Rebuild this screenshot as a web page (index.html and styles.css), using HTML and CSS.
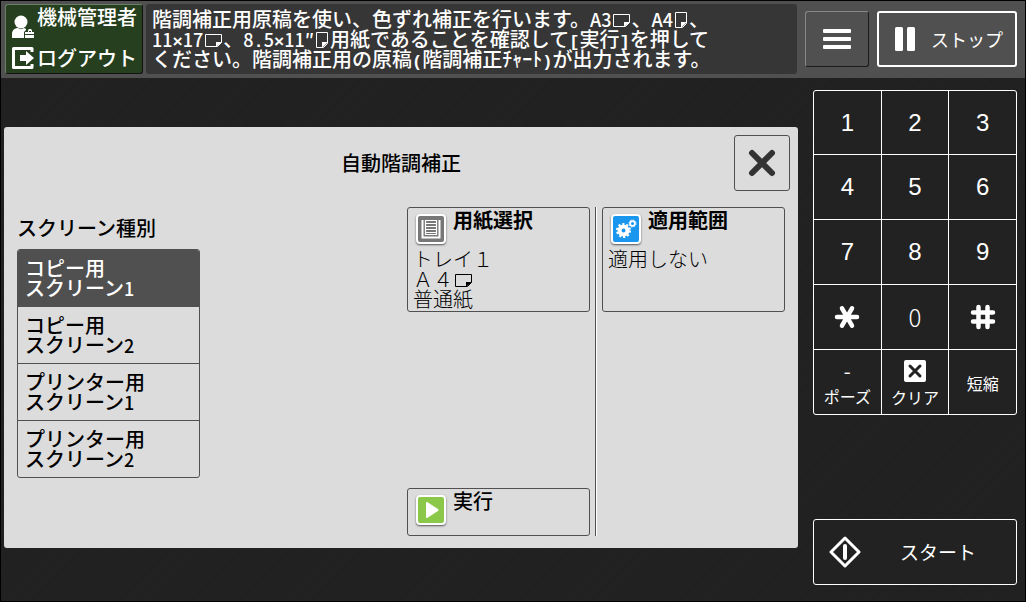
FILE: index.html
```html
<!DOCTYPE html>
<html lang="ja">

<head>
    <meta charset="UTF-8">
    <meta name="viewport" content="width=device-width, initial-scale=1.0">
    <title>自動階調補正</title>
    <link rel="stylesheet" href="styles.css">
</head>

<body>
    <!-- paper orientation marks, used inside the texts -->
    <svg class="defs" width="0" height="0" aria-hidden="true">
        <symbol id="landscape" viewBox="0 0 20 20">
            <path d="M2.500 4.500h16v8l-4 4h-12z" fill="none" stroke="currentColor" />
            <path d="M13 17v-5h6z" fill="currentColor" />
        </symbol>
        <symbol id="portrait" viewBox="0 0 16 20">
            <path d="M2.500 2.500h11v11l-4 4h-7z" fill="none" stroke="currentColor" />
            <path d="M8 18v-6h6z" fill="currentColor" />
        </symbol>
    </svg>

    <header class="topbar">
        <button type="button" class="user">
            <span class="user-row">
                <svg width="24" height="24" viewBox="0 0 24 24" fill="#fff" aria-hidden="true">
                    <circle cx="10" cy="7" r="6.500" />
                    <path d="M1 23v-4c0-4 3-6 6-6 2 1.500 4 1.500 6 0l2 1v1l-2 2v6z" />
                    <path d="M14 17h3v-1q0-2 1.500-2h1q1.500 0 1.500 2v1h2v2h-9zM14 20h9v3h-9zM18 16v1h2v-1z" fill-rule="evenodd" />
                </svg>
                <span>機械管理者</span>
            </span>
            <span class="user-row">
                <svg width="24" height="24" viewBox="0 0 24 24" aria-hidden="true">
                    <path d="M21 6V2.500H2.500v19H21V18" fill="none" stroke="#fff" stroke-width="3" stroke-linejoin="round" />
                    <path d="M9 9h6V5l8 7-8 7v-4H9z" fill="#fff" />
                </svg>
                <span>ログアウト</span>
            </span>
        </button>
        <p class="message">階調補正用原稿を使い、色ずれ補正を行います。<span class="half">A3</span><svg class="mark-l"><use href="#landscape" /></svg>、<span class="half">A4</span><svg class="mark-p"><use href="#portrait" /></svg>、<br>
            <span class="half">11<i>×</i>17</span><svg class="mark-l"><use href="#landscape" /></svg>、<span class="half">8<i>.</i>5<i>×</i>11″</span><svg class="mark-p"><use href="#portrait" /></svg>用紙であることを確認して<span class="half"><i>[</i></span>実行<span class="half"><i>]</i></span>を押して<br>
            ください。階調補正用の原稿<span class="half"><i>(</i></span>階調補正ﾁｬｰﾄ<span class="half"><i>)</i></span>が出力されます。</p>
        <button type="button" class="menu" aria-label="メニュー">
            <svg width="28" height="20" viewBox="0 0 28 20" fill="#fff">
                <rect width="28" height="4" rx="1" />
                <rect y="8" width="28" height="4" rx="1" />
                <rect y="16" width="28" height="4" rx="1" />
            </svg>
        </button>
        <button type="button" class="stop">
            <svg width="20" height="24" viewBox="0 0 20 24" fill="#fff" aria-hidden="true">
                <rect width="8" height="24" rx="1.500" />
                <rect x="12" width="8" height="24" rx="1.500" />
            </svg>
            <span>ストップ</span>
        </button>
    </header>

    <div class="screen">
        <main class="panel">
            <div class="panel-head">
                <h1>自動階調補正</h1>
                <button type="button" class="close" aria-label="閉じる">
                    <svg width="28" height="28" viewBox="0 0 28 28">
                        <path d="M4 4l20 20M24 4L4 24" stroke="#333" stroke-width="6" stroke-linecap="round" />
                    </svg>
                </button>
            </div>
            <div class="panel-body">
                <fieldset class="types">
                    <legend>スクリーン種別</legend>
                    <div class="list">
                        <label><input type="radio" name="type" checked>コピー用<br>スクリーン<span class="half">1</span></label>
                        <label><input type="radio" name="type">コピー用<br>スクリーン<span class="half">2</span></label>
                        <label><input type="radio" name="type">プリンター用<br>スクリーン<span class="half">1</span></label>
                        <label><input type="radio" name="type">プリンター用<br>スクリーン<span class="half">2</span></label>
                    </div>
                </fieldset>
                <div class="column">
                    <button type="button" class="card">
                        <span class="card-title">
                            <span class="badge gray">
                                <svg width="26" height="26" viewBox="0 0 26 26" fill="none" stroke="#fff" aria-hidden="true">
                                    <path d="M4.500 4v17.500h17V4" stroke-width="2" />
                                    <path d="M7.500 4v14.500h11V4M8 4.500h10M8 7.500h10M8 10.500h10M8 13.500h10M8 16.500h10" stroke-width="1.200" />
                                </svg>
                            </span>
                            <b>用紙選択</b>
                        </span>
                        <span class="value">トレイ１<br>Ａ４<svg class="mark-l"><use href="#landscape" /></svg><br>普通紙</span>
                    </button>
                    <button type="button" class="card run">
                        <span class="card-title">
                            <span class="badge green">
                                <svg width="26" height="26" viewBox="0 0 26 26" fill="#fff" aria-hidden="true">
                                    <path d="M8 6q0-1.500 1.500-.8L20 12q1 1 0 2L9.500 20.800Q8 21.500 8 20z" />
                                </svg>
                            </span>
                            <b class="medium">実行</b>
                        </span>
                    </button>
                </div>
                <div class="column last">
                    <button type="button" class="card">
                        <span class="card-title">
                            <span class="badge blue">
                                <svg width="26" height="26" viewBox="0 0 26 26" fill="none" stroke="#fff" aria-hidden="true">
                                    <circle cx="10.500" cy="14.500" r="4" stroke-width="4" />
                                    <circle cx="10.500" cy="14.500" r="6.500" stroke-width="2" stroke-dasharray="2.200 1.880" />
                                    <circle cx="19.500" cy="7.500" r="2.400" stroke-width="1.800" />
                                    <circle cx="19.500" cy="7.500" r="3.500" stroke-width="1" stroke-dasharray="1.400 1.350" />
                                </svg>
                            </span>
                            <b>適用範囲</b>
                        </span>
                        <span class="value">適用しない</span>
                    </button>
                </div>
            </div>
        </main>

        <aside class="side">
            <div class="keypad">
                <button type="button">1</button>
                <button type="button">2</button>
                <button type="button">3</button>
                <button type="button">4</button>
                <button type="button">5</button>
                <button type="button">6</button>
                <button type="button">7</button>
                <button type="button">8</button>
                <button type="button">9</button>
                <button type="button" aria-label="＊">
                    <svg width="26" height="26" viewBox="0 0 26 26" stroke="#fff" stroke-width="4.500" stroke-linecap="round">
                        <path d="M3 13h20M8 4.300l10 17.400M18 4.300L8 21.700" />
                    </svg>
                </button>
                <button type="button" class="zero">0</button>
                <button type="button" aria-label="＃">
                    <svg width="26" height="26" viewBox="0 0 26 26" stroke="#fff" stroke-width="4.500" stroke-linecap="round">
                        <path d="M3 8.500h20M3 17.500h20M8.500 3v20M17.500 3v20" />
                    </svg>
                </button>
                <button type="button" class="small">
                    <span class="key-sign">-</span>
                    <span>ポーズ</span>
                </button>
                <button type="button" class="small">
                    <svg width="22" height="22" viewBox="0 0 22 22" aria-hidden="true">
                        <rect width="22" height="22" rx="2" fill="#fff" />
                        <path d="M6 6l10 10M16 6L6 16" stroke="#222" stroke-width="3" stroke-linecap="round" />
                    </svg>
                    <span>クリア</span>
                </button>
                <button type="button" class="small">短縮</button>
            </div>
            <button type="button" class="start">
                <svg width="32" height="32" viewBox="0 0 32 32" fill="none" stroke="#fff" stroke-linejoin="round" stroke-linecap="round" aria-hidden="true">
                    <path d="M16 2l14 14-14 14L2 16z" stroke-width="3" />
                    <path d="M16 10v12" stroke-width="4" />
                </svg>
                <span>スタート</span>
            </button>
        </aside>
    </div>
</body>

</html>
```
FILE: styles.css
```css
* {
    margin: 0;
    padding: 0;
    box-sizing: border-box;
}

body {
    display: flex;
    flex-direction: column;
    min-height: 100vh;
    border: 1px solid #000;
    background: repeating-linear-gradient(135deg, #222 0, #222 2px, #1f1f1f 2px, #1f1f1f 3px);
    font: 500 20px/20px "Noto Sans CJK JP", sans-serif;
    color: #000;
}

button {
    border: none;
    background: none;
    font: inherit;
    color: inherit;
    cursor: pointer;
}

svg {
    display: block;
    flex: none;
}

.defs {
    position: absolute;
}

/* half-width letters inside the Japanese text */
.half {
    font-size: 18px;
    line-height: 0;
}

.half i {
    font: bold 17px/0 "Liberation Mono", monospace;
}

.mark-l,
.mark-p {
    display: inline-block;
    width: 20px;
    height: 20px;
    margin: -4px 0;
    vertical-align: 1px;
}

.mark-p {
    width: 16px;
}

/* top bar */
.topbar {
    display: flex;
    align-items: center;
    height: 77px;
    padding: 0 8px 1px 4px;
    background-color: #505050;
    color: #fff;
}

.user {
    display: flex;
    flex-direction: column;
    justify-content: space-between;
    width: 138px;
    height: 70px;
    padding: 2px 5px 1px;
    border: 1px solid #111;
    border-top-color: #6b7d66;
    border-left-color: #6b7d66;
    border-radius: 3px;
    background-color: #26401f;
}

.user-row {
    display: flex;
    gap: 2px;
    height: 28px;
    white-space: nowrap;
}

.user-row:first-child svg {
    margin-top: 8px;
}

.user-row:last-child {
    align-items: center;
}

.message {
    flex: 1;
    height: 70px;
    margin-left: 3px;
    padding: 5px 6px;
    border-radius: 3px;
    background-color: #363636;
    white-space: nowrap;
}

.menu {
    display: flex;
    align-items: center;
    justify-content: center;
    width: 64px;
    height: 56px;
    margin: 0 8px;
    border: 1px solid #1b1b1b;
    border-top-color: #888;
    border-left-color: #888;
    border-radius: 3px;
}

.stop {
    display: flex;
    align-items: center;
    gap: 16px;
    width: 140px;
    height: 56px;
    padding: 0 12px 0 16px;
    border: 2px solid #fff;
    border-radius: 3px;
    font-size: 18px;
    font-weight: 400;
    white-space: nowrap;
}

/* dialog */
.screen {
    display: flex;
    flex: 1;
    gap: 15px;
    padding: 12px 8px 16px 3px;
}

.panel {
    flex: 1;
    align-self: flex-start;
    margin-top: 37px;
    border-radius: 3px;
    background-color: #dcdcdc;
}

.panel-head {
    display: grid;
    grid-template-columns: 1fr auto 1fr;
    align-items: center;
    padding: 8px 8px 16px;
}

.panel-head h1 {
    grid-column: 2;
    font-size: 20px;
    font-weight: 500;
}

.close {
    display: flex;
    align-items: center;
    justify-content: center;
    justify-self: end;
    width: 56px;
    height: 56px;
    border: 1px solid #505050;
    border-radius: 3px;
}

.panel-body {
    display: flex;
    min-height: 341px;
    padding: 0 13px 12px;
}

.types {
    width: 183px;
    margin-right: auto;
    border: none;
}

.types legend {
    padding: 11px 0;
}

.list {
    border: 1px solid #505050;
    border-radius: 3px;
    overflow: hidden;
}

.list label {
    position: relative;
    display: block;
    height: 57px;
    padding: 8px 7px;
    border-bottom: 1px solid #505050;
    cursor: pointer;
}

.list label:last-child {
    height: 56px;
    border-bottom: none;
}

.list input {
    position: absolute;
    opacity: 0;
}

.list label:has(:checked) {
    background-color: #505050;
    color: #fff;
}

.column {
    display: flex;
    flex-direction: column;
    justify-content: space-between;
    padding-right: 5px;
    border-right: 1px solid #505050;
}

.column.last {
    padding: 0 0 0 5px;
    border-right: none;
    border-left: 1px solid #fff;
}

.card {
    display: flex;
    flex-direction: column;
    width: 183px;
    height: 105px;
    padding: 2px 5px;
    border: 1px solid #505050;
    border-radius: 3px;
    text-align: left;
}

.card.run {
    height: 48px;
}

.card-title {
    display: flex;
    gap: 7px;
    padding-left: 3px;
}

.card-title b.medium {
    font-weight: 500;
}

.badge {
    height: 30px;
    margin-top: 4px;
    border: 2px solid #fff;
    border-radius: 4px;
    box-shadow: 0 1px 2px #555;
}

.gray {
    background-color: #777;
}

.green {
    background-color: #8bc84a;
}

.blue {
    background-color: #1a96ee;
}

.value {
    margin-top: 5px;
    font-weight: 300;
}

/* ten keys */
.side {
    display: flex;
    flex-direction: column;
    justify-content: space-between;
    width: 204px;
    color: #fff;
}

.keypad {
    display: grid;
    grid-template-columns: repeat(3, 1fr);
    grid-template-rows: 63px;
    grid-auto-rows: 64px;
    gap: 1px;
    border: 1px solid #fff;
    border-radius: 3px;
    background-color: #fff;
    overflow: hidden;
}

.keypad button {
    display: flex;
    flex-direction: column;
    align-items: center;
    justify-content: center;
    background-color: #222;
    font: 400 24px/24px "Liberation Sans", sans-serif;
}

.keypad .zero {
    font-family: "Noto Sans CJK JP", sans-serif;
    font-weight: 300;
}

.keypad .small {
    gap: 5px;
    padding-top: 2px;
    font: 400 16px/20px "Noto Sans CJK JP", sans-serif;
}

.key-sign {
    font-size: 20px;
}

.start {
    display: flex;
    align-items: center;
    justify-content: space-between;
    height: 66px;
    padding: 0 40px 0 15px;
    border: 1px solid #fff;
    border-radius: 3px;
    background-color: #222;
    font-size: 19px;
    font-weight: 400;
}
```
